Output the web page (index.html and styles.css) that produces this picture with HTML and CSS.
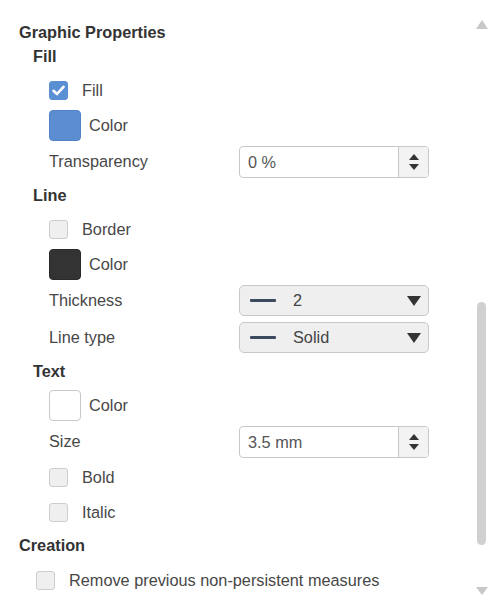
FILE: index.html
```html
<!DOCTYPE html>
<html>
<head>
<meta charset="utf-8">
<link rel="stylesheet" href="styles.css">
</head>
<body>
<div class="page">
  <div class="content">
    <div class="h1">Graphic Properties</div>

    <div class="h2">Fill</div>
    <div class="row"><span class="cb checked"><svg viewBox="0 0 19 19" width="19" height="19"><path d="M4.5 9.8 L8 13 L14.5 5.8" fill="none" stroke="#fff" stroke-width="2.6" stroke-linecap="round" stroke-linejoin="round"/></svg></span><span class="cb-label">Fill</span></div>
    <div class="row"><span class="swatch blue"></span><span class="sw-label">Color</span></div>
    <div class="row ctl"><span class="lbl">Transparency</span>
      <div class="spin"><span class="val">0 %</span><span class="btns"><i class="up"></i><i class="down"></i></span></div></div>

    <div class="h2 gap">Line</div>
    <div class="row"><span class="cb"></span><span class="cb-label">Border</span></div>
    <div class="row"><span class="swatch dark"></span><span class="sw-label">Color</span></div>
    <div class="row ctl"><span class="lbl">Thickness</span>
      <div class="select"><span class="line"></span><span class="sval">2</span><i class="caret"></i></div></div>
    <div class="row ctl"><span class="lbl">Line type</span>
      <div class="select"><span class="line"></span><span class="sval">Solid</span><i class="caret"></i></div></div>

    <div class="h2 gap">Text</div>
    <div class="row"><span class="swatch white"></span><span class="sw-label">Color</span></div>
    <div class="row ctl"><span class="lbl">Size</span>
      <div class="spin"><span class="val">3.5 mm</span><span class="btns"><i class="up"></i><i class="down"></i></span></div></div>
    <div class="row"><span class="cb"></span><span class="cb-label">Bold</span></div>
    <div class="row"><span class="cb"></span><span class="cb-label">Italic</span></div>

    <div class="h1 gap">Creation</div>
    <div class="row outer"><span class="cb"></span><span class="cb-label">Remove previous non-persistent measures</span></div>
  </div>
  <div class="scrollbar">
    <i class="sb-up"></i>
    <span class="thumb"></span>
    <i class="sb-down"></i>
  </div>
</div>
</body>
</html>
```

FILE: styles.css
```css
html, body {
  margin: 0;
  padding: 0;
  background: #fff;
}
body {
  font-family: "Liberation Sans", Arial, sans-serif;
  font-size: 16.3px;
  color: #474747;
}
.page {
  display: flex;
  width: 498px;
  height: 608px;
}
.content {
  width: 475px;
  padding-top: 20px;
}
.h1 {
  height: 24px;
  line-height: 24px;
  padding-left: 19px;
  font-weight: bold;
  color: #333;
}
.h2 {
  height: 24px;
  line-height: 24px;
  padding-left: 33px;
  font-weight: bold;
  color: #333;
  margin-bottom: 5px;
}
.h1.gap {
  margin-top: 3px;
  margin-bottom: 6px;
}
.h2.gap {
  margin-top: 3px;
}
.row {
  height: 35px;
  display: flex;
  align-items: center;
  padding-left: 49px;
}
.row.ctl {
  height: 37px;
}
.row.outer {
  padding-left: 36px;
}
.cb {
  width: 19px;
  height: 19px;
  box-sizing: border-box;
  border: 1px solid #cdcdcd;
  border-radius: 3px;
  background: #efefef;
  display: inline-flex;
}
.cb.checked {
  background: #5b8fd3;
  border-color: #5b8fd3;
}
.cb.checked svg {
  margin: -1px;
}
.cb-label {
  margin-left: 14px;
}
.swatch {
  width: 32px;
  height: 31px;
  box-sizing: border-box;
  border-radius: 4px;
  border: 1px solid #c8c8c8;
}
.swatch.blue {
  background: #5b8dd0;
  border-color: #4f83c8;
}
.swatch.dark {
  background: #333;
  border-color: #2a2a2a;
}
.swatch.white {
  background: #fff;
  border-color: #c9c9c9;
}
.sw-label {
  margin-left: 8px;
}
.lbl {
  width: 190px;
}
.spin {
  width: 190px;
  height: 32px;
  box-sizing: border-box;
  border: 1px solid #c8c8c8;
  border-radius: 4px;
  display: flex;
  background: #fff;
  overflow: hidden;
}
.spin .val {
  flex: 1;
  padding-left: 8px;
  line-height: 30px;
  color: #555;
}
.btns {
  width: 29px;
  border-left: 1px solid #c8c8c8;
  background: #f3f3f3;
  display: flex;
  flex-direction: column;
  align-items: center;
  justify-content: center;
  gap: 4px;
}
.up {
  width: 0;
  height: 0;
  border-left: 5px solid transparent;
  border-right: 5px solid transparent;
  border-bottom: 6px solid #333;
}
.down {
  width: 0;
  height: 0;
  border-left: 5px solid transparent;
  border-right: 5px solid transparent;
  border-top: 6px solid #333;
}
.select {
  width: 190px;
  height: 31px;
  box-sizing: border-box;
  border: 1px solid #c8c8c8;
  border-radius: 5px;
  background: #efefef;
  display: flex;
  align-items: center;
  padding-left: 10px;
  padding-right: 7px;
}
.line {
  width: 26px;
  height: 3px;
  background: #3c4a5e;
  border-radius: 1px;
}
.sval {
  flex: 1;
  margin-left: 17px;
  color: #444;
}
.caret {
  width: 0;
  height: 0;
  border-left: 7px solid transparent;
  border-right: 7px solid transparent;
  border-top: 10px solid #333;
}
.scrollbar {
  width: 13px;
  display: flex;
  flex-direction: column;
  align-items: center;
}
.sb-up {
  margin-top: 20px;
  width: 0;
  height: 0;
  border-left: 6px solid transparent;
  border-right: 6px solid transparent;
  border-bottom: 9px solid #c8c8c8;
}
.thumb {
  margin-top: 273px;
  width: 9px;
  height: 243px;
  border-radius: 5px;
  background: #d0d0d0;
}
.sb-down {
  margin-top: 42px;
  width: 0;
  height: 0;
  border-left: 6px solid transparent;
  border-right: 6px solid transparent;
  border-top: 8px solid #c8c8c8;
}
```
